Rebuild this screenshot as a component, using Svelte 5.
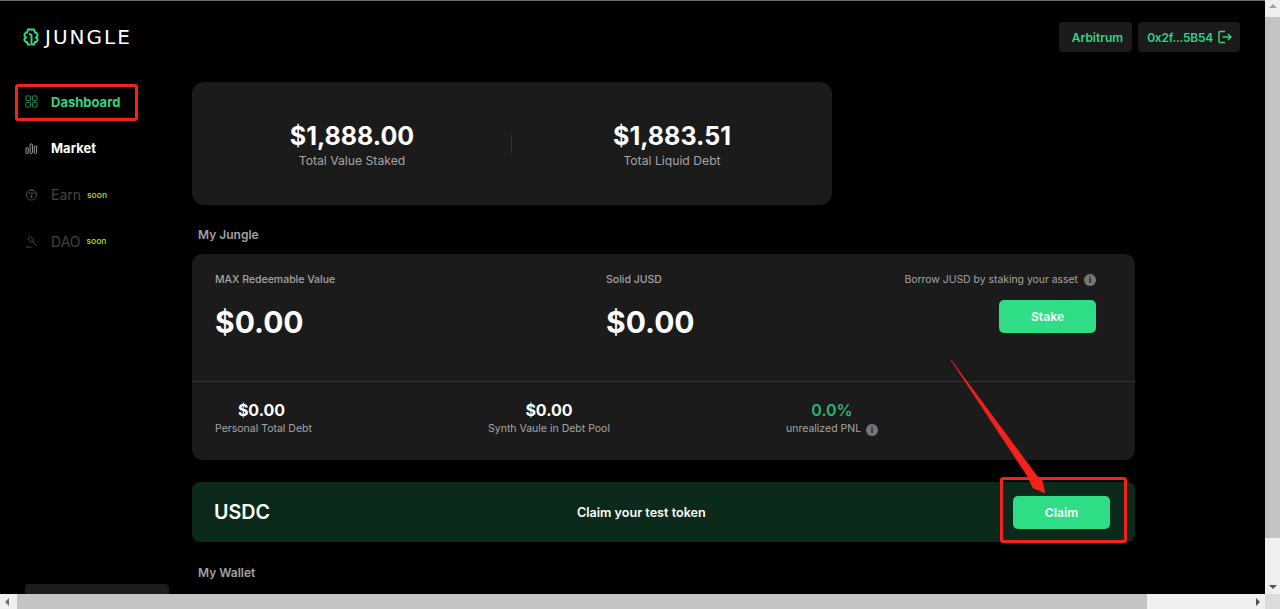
<script lang="ts">
  const nav = [
    { label: 'Dashboard', state: 'active', icon: 'grid' },
    { label: 'Market', state: 'normal', icon: 'bars' },
    { label: 'Earn', state: 'off', icon: 'pot', soon: true },
    { label: 'DAO', state: 'off', icon: 'gavel', soon: true }
  ];
</script>

<div class="window">
  <div class="viewport">
    <aside class="sidebar">
      <div class="logo">
        <svg width="16" height="18" viewBox="0 0 16 18" fill="none" stroke="#33dd88" stroke-width="1.900">
          <path d="M8 1.500H5L4 4.500H3L1.500 6.500V8L3 9.500 1.500 11v1.500L3 14h1l1 2.500h2" />
          <path d="M8 1.500h3l1 3h1l1.500 2V8L13 9.500l1.500 1.500v1.500L13 14h-1l-1 2.500H8.500V7L6 5.500" />
        </svg>
        <span class="wordmark">JUNGLE</span>
      </div>
      <nav class="nav">
        {#each nav as item}
          <div class="nav-item {item.state}">
            <svg class="nav-icon" width="13" height="13" viewBox="0 0 14 14" fill="none" stroke="currentColor" stroke-width="1">
              {#if item.icon === 'grid'}
                <rect x="1" y="1" width="5" height="5" rx="1" />
                <rect x="8" y="1" width="5" height="5" rx="1" />
                <rect x="1" y="8" width="5" height="5" rx="1" />
                <rect x="8" y="8" width="5" height="5" rx="1" />
              {:else if item.icon === 'bars'}
                <rect x="1" y="6" width="2.500" height="6.500" rx="1.250" />
                <rect x="5.500" y="2" width="2.500" height="10.500" rx="1.250" />
                <rect x="10" y="4" width="2.500" height="8.500" rx="1.250" />
              {:else if item.icon === 'pot'}
                <circle cx="7" cy="7.500" r="5.500" />
                <path d="M3 5.500h8M4.500 2.500h5M7 7v3.500M5.500 9 7 10.500 8.500 9" />
              {:else}
                <path d="M5.500 1.500l4 4-2.500 2.500-4-4zM8 7l4.500 4.500M1 13h6" />
              {/if}
            </svg>
            <span class="nav-label">{item.label}</span>
            {#if item.soon}<span class="soon">soon</span>{/if}
          </div>
        {/each}
      </nav>
      <div class="sidebar-foot"></div>
    </aside>

    <main class="main">
      <header class="topbar">
        <div class="chip network">Arbitrum</div>
        <div class="chip wallet-chip">
          0x2f...5B54
          <svg width="14" height="14" viewBox="0 0 14 14" fill="none" stroke="currentColor" stroke-width="1.400">
            <path d="M7 1.500H2a1 1 0 0 0-1 1v9a1 1 0 0 0 1 1h5M4.500 7H13M10 4l3 3-3 3" />
          </svg>
        </div>
      </header>

      <section class="stats-card">
        <div class="stat">
          <div class="stat-value">$1,888.00</div>
          <div class="stat-label">Total Value Staked</div>
        </div>
        <div class="stat-divider"></div>
        <div class="stat">
          <div class="stat-value">$1,883.51</div>
          <div class="stat-label">Total Liquid Debt</div>
        </div>
      </section>

      <h3 class="section-title">My Jungle</h3>
      <section class="jungle-card">
        <div class="jungle-top">
          <div class="col-a">
            <div class="small-label">MAX Redeemable Value</div>
            <div class="big-value">$0.00</div>
          </div>
          <div class="col-b">
            <div class="small-label">Solid JUSD</div>
            <div class="big-value">$0.00</div>
          </div>
          <div class="col-c">
            <div class="borrow-note">
              Borrow JUSD by staking your asset
              <span class="info">i</span>
            </div>
            <div class="btn stake">Stake</div>
          </div>
        </div>
        <div class="jungle-bottom">
          <div class="metric m-a">
            <div class="metric-value">$0.00</div>
            <div class="metric-label">Personal Total Debt</div>
          </div>
          <div class="metric m-b">
            <div class="metric-value">$0.00</div>
            <div class="metric-label">Synth Vaule in Debt Pool</div>
          </div>
          <div class="metric m-c">
            <div class="metric-value green">0.0%</div>
            <div class="metric-label">unrealized PNL <span class="info">i</span></div>
          </div>
        </div>
      </section>

      <section class="claim-card">
        <div class="claim-token">USDC</div>
        <div class="claim-text">Claim your test token</div>
        <div class="btn claim">Claim</div>
      </section>

      <h3 class="section-title wallet">My Wallet</h3>
    </main>
  </div>

  <!-- scrollbars -->
  <div class="vbar">
    <span class="arrow up"></span>
    <span class="vthumb"></span>
    <span class="arrow down"></span>
  </div>
  <div class="hbar">
    <span class="arrow left"></span>
    <span class="hthumb"></span>
    <span class="arrow right"></span>
  </div>
  <div class="corner"></div>

  <!-- red markup drawn over the screenshot -->
  <div class="mark mark-nav"></div>
  <div class="mark mark-claim"></div>
  <svg class="mark-arrow" width="1280" height="609" viewBox="0 0 1280 609">
    <path d="M951 360 1037 476 1042 480 1045 493 1033 488 1028 477Z" fill="#f5221b" stroke="#f5221b" stroke-width="0.600" />
  </svg>
</div>

<style>
  :global(body) {
    margin: 0;
    background: #000;
  }

  .window {
    position: relative;
    width: 1280px;
    height: 609px;
    overflow: hidden;
    background: #000;
    color: #fff;
    font-family: Inter, "Liberation Sans", sans-serif;
  }

  .viewport {
    display: flex;
    width: 1265px;
    height: 594px;
    overflow: hidden;
    border-top: 1px solid #6a6a6a;
    box-sizing: border-box;
  }

  .sidebar {
    width: 192px;
    flex: none;
    display: flex;
    flex-direction: column;
    padding-left: 25px;
    box-sizing: border-box;
  }

  .logo {
    display: flex;
    align-items: center;
    gap: 6px;
    height: 20px;
    margin: 26px 0 0 -2px;
  }

  .wordmark {
    font-family: "DejaVu Sans", sans-serif;
    font-size: 20px;
    font-weight: 400;
    letter-spacing: 2px;
    color: #fff;
  }

  .nav {
    display: flex;
    flex-direction: column;
    gap: 28.500px;
    margin-top: 45.500px;
  }

  .nav-item {
    display: flex;
    align-items: center;
    height: 18px;
    font-size: 13px;
    font-weight: 700;
  }

  .nav-icon {
    flex: none;
    margin-right: 13px;
  }

  .nav-item.active {
    color: #2fd583;
  }

  .nav-item.active .nav-icon {
    color: #2a9c64;
  }

  .nav-item.normal .nav-icon {
    color: #a8a8a8;
  }

  .nav-item.off {
    color: #434343;
    font-size: 14px;
    font-weight: 400;
  }

  .nav-item.off .nav-icon {
    color: #505050;
  }

  .soon {
    margin-left: 6px;
    font-size: 8.500px;
    font-weight: 500;
    color: #b4dc3c;
  }

  .sidebar-foot {
    margin-top: auto;
    width: 144px;
    height: 10px;
    background: #1c1c1c;
    border-radius: 4px 4px 0 0;
  }

  .main {
    flex: 1;
    padding-right: 130px;
    min-width: 0;
  }

  .topbar {
    display: flex;
    justify-content: flex-end;
    gap: 6px;
    margin: 21px -105px 0 0;
  }

  .chip {
    display: flex;
    align-items: center;
    height: 30px;
    background: #1b1b1b;
    border-radius: 4px;
    color: #2fd583;
    font-size: 12px;
    font-weight: 600;
  }

  .network {
    padding: 0 9px 0 13px;
  }

  .wallet-chip {
    gap: 5px;
    padding: 0 8px 0 9px;
    letter-spacing: -0.250px;
  }

  .stats-card {
    display: flex;
    align-items: center;
    width: 640px;
    height: 123px;
    margin-top: 30px;
    background: #1b1b1b;
    border-radius: 12px;
  }

  .stat {
    flex: 1;
    text-align: center;
    padding-top: 2px;
  }

  .stat-value {
    font-size: 25px;
    font-weight: 700;
    line-height: 30px;
  }

  .stat-label {
    margin-top: 2px;
    font-size: 12.200px;
    line-height: 15px;
    color: #a5a5a5;
  }

  .stat-divider {
    width: 1px;
    height: 18px;
    margin-left: -1px;
    background: #333;
  }

  .section-title {
    margin: 22px 0 0 6px;
    font-size: 12px;
    font-weight: 600;
    line-height: 15px;
    color: #a0a0a0;
  }

  .jungle-card {
    margin-top: 12px;
    height: 206px;
    background: #1b1b1b;
    border-radius: 10px;
    display: flex;
    flex-direction: column;
  }

  .jungle-top {
    display: flex;
    height: 127px;
    flex: none;
    border-bottom: 1px solid #333;
  }

  .col-a {
    width: 414px;
    padding: 19px 0 0 23px;
    box-sizing: border-box;
  }

  .col-b {
    width: 236px;
    padding-top: 19px;
  }

  .col-c {
    flex: 1;
    padding: 19px 39px 0 0;
    display: flex;
    flex-direction: column;
    align-items: flex-end;
  }

  .small-label,
  .borrow-note {
    font-size: 10.500px;
    line-height: 14px;
    color: #a5a5a5;
  }

  .small-label {
    font-weight: 500;
  }

  .borrow-note {
    display: flex;
    align-items: center;
    gap: 4px;
    font-size: 10.400px;
  }

  .big-value {
    margin-top: 16px;
    font-size: 30px;
    font-weight: 700;
    line-height: 38px;
  }

  .btn {
    display: flex;
    align-items: center;
    justify-content: center;
    width: 97px;
    height: 33px;
    background: #2fdd87;
    border-radius: 5px;
    color: #e8fff2;
    font-size: 12px;
    font-weight: 700;
  }

  .stake {
    margin-top: 13px;
  }

  .info {
    display: inline-flex;
    align-items: center;
    justify-content: center;
    width: 12px;
    height: 12px;
    border-radius: 50%;
    background: #777;
    color: #1b1b1b;
    font-size: 9px;
    font-weight: 700;
    vertical-align: -1px;
    margin-left: 2px;
  }

  .jungle-bottom {
    flex: 1;
    display: flex;
    padding-top: 18px;
  }

  .metric {
    text-align: center;
  }

  .m-a {
    width: 143px;
  }

  .m-a .metric-value {
    padding-right: 4px;
  }

  .m-b {
    width: 170px;
    margin-left: 129px;
  }

  .m-c {
    width: 110px;
    margin-left: 143px;
  }

  .metric-value {
    font-size: 16px;
    font-weight: 700;
    line-height: 20px;
  }

  .metric-value.green {
    color: #2cb472;
    font-weight: 600;
  }

  .metric-label {
    font-size: 10.500px;
    line-height: 14px;
    color: #a5a5a5;
    margin-top: 2px;
  }

  .claim-card {
    display: flex;
    align-items: center;
    height: 60px;
    margin-top: 22px;
    background: #0b2a1b;
    border-radius: 8px;
  }

  .claim-token {
    width: 385px;
    padding-left: 22px;
    box-sizing: border-box;
    font-size: 19.700px;
    font-weight: 600;
  }

  .claim-text {
    font-size: 12.600px;
    font-weight: 600;
    white-space: nowrap;
  }

  .claim {
    margin-left: auto;
    margin-right: 25px;
  }

  .section-title.wallet {
    margin-top: 23px;
  }

  .vbar {
    position: absolute;
    top: 0;
    right: 0;
    width: 15px;
    height: 594px;
    background: #f0f0f0;
    display: flex;
    flex-direction: column;
    align-items: center;
  }

  .vthumb {
    width: 15px;
    flex: 1;
    background: #c4c4c4;
    margin-bottom: 47px;
  }

  .hbar {
    position: absolute;
    left: 0;
    bottom: 0;
    width: 1265px;
    height: 15px;
    background: #f0f0f0;
    display: flex;
    align-items: center;
  }

  .hthumb {
    width: 1130px;
    height: 15px;
    background: #c4c4c4;
    margin-left: 8px;
  }

  .corner {
    position: absolute;
    right: 0;
    bottom: 0;
    width: 15px;
    height: 15px;
    background: #dcdcdc;
  }

  .arrow {
    flex: none;
    width: 0;
    height: 0;
    border: 4px solid transparent;
  }

  .arrow.up {
    margin: 4px 0 9px;
    border-top: 0;
    border-bottom-color: #a0a0a0;
  }

  .arrow.down {
    margin-bottom: 5px;
    border-bottom: 0;
    border-top-color: #505050;
  }

  .arrow.left {
    margin-left: 5px;
    border-left: 0;
    border-right-color: #707070;
  }

  .arrow.right {
    margin-left: auto;
    margin-right: 5px;
    border-right: 0;
    border-left-color: #505050;
  }

  .mark {
    position: absolute;
    border: 3px solid #f5221b;
    border-radius: 3px;
    box-sizing: border-box;
  }

  .mark-nav {
    left: 15px;
    top: 84px;
    width: 123px;
    height: 37px;
  }

  .mark-claim {
    left: 1000px;
    top: 477px;
    width: 127px;
    height: 66px;
  }

  .mark-arrow {
    position: absolute;
    inset: 0;
    pointer-events: none;
  }
</style>
